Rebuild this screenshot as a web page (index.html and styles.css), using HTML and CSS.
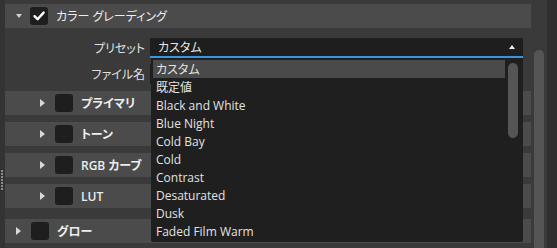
FILE: index.html
```html
<!DOCTYPE html>
<html lang="ja">
<head>
<meta charset="UTF-8">
<title>カラー グレーディング</title>
<link rel="stylesheet" href="styles.css">
</head>
<body>
<div class="window">
  <div class="grip"><span class="dots"></span></div>

  <div class="panel">
    <div class="group-head">
      <span class="caret down"></span>
      <span class="check"><svg width="18" height="18" viewBox="0 0 18 18"><path d="M4.5 9.2 L7.6 12.2 L13.6 5.6" fill="none" stroke="#fff" stroke-width="2.4" stroke-linecap="round" stroke-linejoin="round"/></svg></span>
      <span class="title">カラー グレーディング</span>
    </div>

    <div class="props">
      <div class="prop">
        <span class="label">プリセット</span>
        <div class="combo"><span>カスタム</span><span class="up"></span></div>
      </div>
      <div class="prop">
        <span class="label">ファイル名</span>
        <div class="field"></div>
      </div>
    </div>

    <div class="group-head sub">
      <span class="caret right"></span>
      <span class="check"></span>
      <span class="title">プライマリ</span>
    </div>
    <div class="group-head sub">
      <span class="caret right"></span>
      <span class="check"></span>
      <span class="title">トーン</span>
    </div>
    <div class="group-head sub">
      <span class="caret right"></span>
      <span class="check"></span>
      <span class="title">RGB カーブ</span>
    </div>
    <div class="group-head sub">
      <span class="caret right"></span>
      <span class="check"></span>
      <span class="title">LUT</span>
    </div>
    <div class="group-head last">
      <span class="caret right"></span>
      <span class="check"></span>
      <span class="title">グロー</span>
    </div>
  </div>

  <div class="gutter"><div class="thumb"></div></div>
  <div class="edge"></div>

  <div class="popup">
    <ul class="items">
      <li class="sel">カスタム</li>
      <li>既定値</li>
      <li>Black and White</li>
      <li>Blue Night</li>
      <li>Cold Bay</li>
      <li>Cold</li>
      <li>Contrast</li>
      <li>Desaturated</li>
      <li>Dusk</li>
      <li>Faded Film Warm</li>
    </ul>
    <div class="popup-bar"><div class="popup-thumb"></div></div>
  </div>
</div>
</body>
</html>
```

FILE: styles.css
```css
body { margin: 0; background: #3a3a3a; color: #e6e6e6; font-family: "Open Sans", "Noto Sans CJK JP", sans-serif; font-size: 12px; font-feature-settings: "palt"; }
.window { position: relative; display: flex; width: 557px; height: 248px; overflow: hidden; background: #3a3a3a; }

.grip { width: 5px; background: #333; display: flex; align-items: flex-start; padding-top: 170px; box-sizing: border-box; }
.dots { width: 2px; height: 20px; margin-left: 1px; background: repeating-linear-gradient(#8a8a8a 0 2px, transparent 2px 3px); }

.panel { width: 526px; padding-top: 4px; display: flex; flex-direction: column; }
.group-head { height: 24px; background: #4b4b4b; display: flex; align-items: center; padding-left: 11px; }
.group-head.sub { padding-left: 35px; margin-bottom: 7px; }
.group-head.last { margin-top: 4px; }
.group-head.sub .title, .group-head.last .title { font-weight: 600; }
.caret { width: 0; height: 0; border-style: solid; border-color: transparent; }
.caret.down { border-width: 4px 3.5px 0 3.5px; border-top-color: #d0d0d0; margin-right: 8px; }
.caret.right { border-width: 4px 0 4px 5px; border-left-color: #d8d8d8; margin-right: 10px; margin-left: 0; }
.check { width: 18px; height: 18px; border-radius: 3px; background: #1e1e1e; display: flex; }
.title { margin-left: 8px; color: #eee; }

.props { height: 63px; padding-top: 10px; box-sizing: border-box; }
.prop { display: flex; align-items: center; height: 20px; margin-bottom: 6px; }
.label { width: 140px; text-align: right; margin-right: 5px; color: #e0e0e0; }
.combo { width: 357px; height: 18px; background: #1e1e1e; border-bottom: 2px solid #3a96dc; display: flex; align-items: center; justify-content: space-between; padding: 0 8px; }
.up { width: 0; height: 0; border-style: solid; border-color: transparent; border-width: 0 3.5px 4px 3.5px; border-bottom-color: #eee; }
.field { width: 373px; height: 20px; background: #1e1e1e; }

.gutter { width: 16px; padding: 50px 3px 0; box-sizing: border-box; }
.thumb { height: 210px; background: #555; border-radius: 5px; }
.edge { width: 10px; background: #2f2f2f; }

.popup { position: absolute; left: 151px; top: 58px; width: 372px; height: 184px; background: #1f1f1f; display: flex; padding: 2px 0 0 2px; box-sizing: border-box; border-radius: 0 0 2px 2px; }
.items { list-style: none; margin: 0; padding: 0; width: 352px; }
.items li { height: 18px; line-height: 16px; padding: 2px 0 0 3px; box-sizing: border-box; color: #e2e2e2; }
.items li.sel { background: #4a4a4a; }
.popup-bar { padding: 3px 0 0 3px; }
.popup-thumb { width: 10px; height: 75px; background: #555; border-radius: 5px; }
```
